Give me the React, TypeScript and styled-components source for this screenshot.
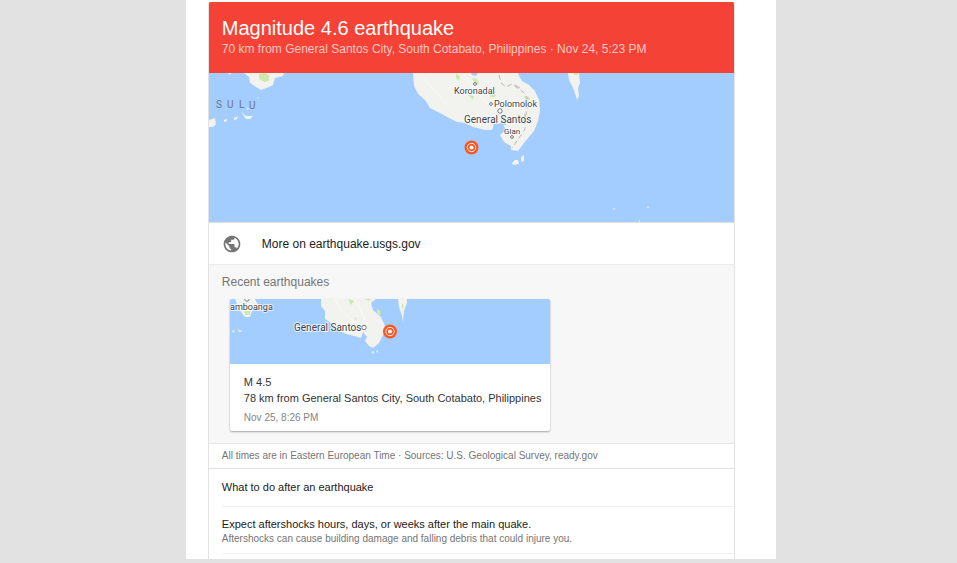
import React from "react";
import styled, { createGlobalStyle } from "styled-components";

const GlobalStyle = createGlobalStyle`
  * { box-sizing: border-box; }
  body {
    margin: 0;
    background: #e2e2e2;
    font-family: "Liberation Sans", Arial, sans-serif;
    color: #212121;
  }
  h1, h2, h3, p { margin: 0; font-weight: normal; }
`;

const Page = styled.main`
  min-height: 100vh;
  padding: 0 19% 4px;
  display: flex;
`;

const Sheet = styled.div`
  flex: 1;
  margin: 0 0 0 4px;
  padding: 2px 41px 0 22px;
  background: #fff;
`;

const Panel = styled.article`
  height: 100%;
  border: 1px solid #e2e2e2;
  border-width: 0 1px;
  border-radius: 2px 2px 0 0;
  overflow: hidden;
`;

const Header = styled.header`
  padding: 14px 13px;
  background: #f44336;
  color: #fff;
`;

const Title = styled.h1`
  font-size: 20px;
  line-height: 24px;
`;

const Subtitle = styled.p`
  font-size: 12px;
  line-height: 19px;
  color: #fcc7c3;
`;

const MapFrame = styled.div<{ $height: number }>`
  height: ${(p) => p.$height}px;
  overflow: hidden;
  background: #a3ccff;
  svg { display: block; }
`;

const MapLabel = styled.text<{ $size: number }>`
  font-family: Roboto, sans-serif;
  font-size: ${(p) => p.$size}px;
  fill: #444;
  stroke: #fff;
  stroke-width: 2px;
  stroke-opacity: 0.7;
  paint-order: stroke;
`;

const SeaLabel = styled(MapLabel)`
  fill: #6b7480;
  stroke: none;
`;

const SourceLink = styled.a`
  display: flex;
  align-items: center;
  gap: 20px;
  height: 43px;
  padding: 0 13px;
  border-top: 1px solid #e2e2e2;
  border-bottom: 1px solid #ebebeb;
  font-size: 12px;
  color: #212121;
  text-decoration: none;
`;

const Recent = styled.section`
  padding: 9px 13px 12px;
  background: #f7f7f7;
  border-bottom: 1px solid #e6e6e6;
`;

const RecentTitle = styled.h2`
  font-size: 12px;
  line-height: 16px;
  color: #757575;
`;

const QuakeCard = styled.a`
  display: block;
  width: 320px;
  max-width: 100%;
  margin: 9px 8px 0;
  overflow: hidden;
  border-radius: 2px;
  background: #fff;
  box-shadow: 0 1px 2px rgba(0, 0, 0, 0.35);
  color: #333;
  text-decoration: none;
`;

const CardBody = styled.div`
  padding: 10px 8px 6px 14px;
  font-size: 11px;
  line-height: 16px;
`;

const CardDate = styled.p`
  margin-top: 5px;
  font-size: 10px;
  line-height: 14px;
  color: #858585;
`;

const Sources = styled.p`
  padding: 0 13px;
  font-size: 10px;
  line-height: 24px;
  color: #757575;
  border-bottom: 1px solid #e2e2e2;
`;

const Tips = styled.section`
  padding-left: 13px;
`;

const TipsTitle = styled.h2`
  font-size: 11px;
  line-height: 37px;
  border-bottom: 1px solid #f0f0f0;
`;

const Tip = styled.div`
  padding: 10px 0 7px;
  border-bottom: 1px solid #f0f0f0;
`;

const TipTitle = styled.h3`
  font-size: 11px;
  line-height: 15px;
`;

const TipText = styled.p`
  font-size: 10px;
  line-height: 14px;
  color: #757575;
`;

const Epicenter = ({ x, y }: { x: number; y: number }) => (
  <g transform={`translate(${x} ${y})`}>
    <circle r="7" fill="#fa5523" />
    <circle r="4.2" fill="none" stroke="#fff" strokeWidth="0.9" />
    <circle r="2" fill="#fff" />
  </g>
);

const Town = ({ x, y, r = 1.4 }: { x: number; y: number; r?: number }) => (
  <circle cx={x} cy={y} r={r} fill="#fff" stroke="#777" strokeWidth="1" />
);

const RegionMap = () => (
  <svg width="525" height="149" viewBox="0 0 525 149" role="img" aria-label="Map of the earthquake epicenter">
    <g fill="#f2f2ee">
      <path d="M35 0L40 4L41 10L47 14L52 17L60 14L64 12L66 5L74 3L75 0Z" />
      <path d="M19 0H22L21 2ZM204 0L205 13L209 21L216 27L221 35L233 41L240 45L248 49L256 50L264 54L276 57L283 57L285 51L293 50L297 57L291 62L295 69L302 73L302 77L309 78L315 70L325 58L329 48L331 38L330 27L326 18L320 12L313 8L310 3L309 0Z" />
      <path d="M359 0L360 7L364 15L366 20L368 27L370 23L369 15L371 10L370 0Z" />
      <path d="M303 90L306 87H309L310 91L304 92ZM312 84L315 82V88L312 89Z" />
      <path d="M0 47L6 45L7 51L4 54L0 54ZM15 47L18 46L18 48L15 49ZM25 45L29 43L28 46L25 47ZM32 39L37 43L44 43L41 46L37 46ZM48 25L50 24L49 26ZM38 34L40 36L38 37Z" />
    </g>
    <g fill="#cde9ad">
      <path d="M50 1L55 0L60 2L60 8L55 9L50 6Z" />
      <path d="M247 1L251 3L250 8L247 5ZM263 5L268 6L270 11L266 12ZM259 22L265 23L264 27ZM282 20L287 21L286 24L281 24ZM315 23L320 24L321 27L316 27ZM365 0H369V2H365Z" />
    </g>
    <path d="M262 0L269 0L267 3L263 2ZM293 42L297 43L297 52L292 52Z" fill="#a3ccff" />
    <g fill="none" stroke="#b8b8b8" strokeWidth="1">
      <path d="M290 2L292 10L297 14L303 11L307 14L313 18L318 24L319 34L316 45L316 56L310 65L303 75" strokeDasharray="5 3" />
      <path d="M306 12L311 15M316 41L315 49" />
    </g>
    <g fill="none" stroke="#fff" strokeWidth="1" opacity="0.45">
      <path d="M255 0L262 12L278 30L291 42M213 3L225 17L240 34" />
    </g>
    <g fill="#e1e7f1">
      <circle cx="405" cy="136" r="1" /><circle cx="439" cy="134" r="1" /><path d="M429 149L431 146L431 149Z" />
    </g>
    <SeaLabel $size={10} x="7" y="35">S</SeaLabel>
    <SeaLabel $size={10} x="18" y="35">U</SeaLabel>
    <SeaLabel $size={10} x="30" y="35">L</SeaLabel>
    <SeaLabel $size={10} x="40" y="36">U</SeaLabel>
    <Town x={266} y={11} />
    <MapLabel $size={9} x="245" y="21">Koronadal</MapLabel>
    <Town x={282} y={31} />
    <MapLabel $size={9} x="285" y="34">Polomolok</MapLabel>
    <Town x={291} y={38} r={2.2} />
    <MapLabel $size={10} x="255" y="50">General Santos</MapLabel>
    <MapLabel $size={8} x="295" y="61">Glan</MapLabel>
    <Town x={303} y={64} />
    <Epicenter x={262.5} y={74.5} />
  </svg>
);

const CardMap = () => (
  <svg width="320" height="65" viewBox="0 0 320 65" role="img" aria-label="Map of the recent earthquake">
    <g fill="#f2f2ee">
      <path d="M91 0L91 7L95 12L95 20L101 24L108 31L116 35L124 37L131 39L133 33L137 38L135 42L139 47L143 49L149 44L154 34L155 27L151 18L143 11L141 4L146 0Z" />
      <path d="M8 8L11 13L15 18L20 18L22 12L29 8L25 0H5Z" />
      <path d="M168 0L169 8L172 17L173 23L174 12L177 4V0Z" />
      <path d="M141 53L144 52L144 55ZM146 52L148 51V54ZM2 31L5 32L3 34ZM7 28L9 31L13 32L9 33Z" />
    </g>
    <g fill="#cde9ad">
      <path d="M14 12L20 12L20 16L15 16ZM118 0L124 2L121 6ZM134 0L141 0L139 2ZM147 10L151 12L150 17L147 15ZM172 4L174 7L172 10ZM125 18L127 20L125 21Z" />
    </g>
    <g fill="none" stroke="#fff" strokeWidth="1" opacity="0.6">
      <path d="M104 0L113 13L123 22L134 30M125 0L132 14L137 25" />
    </g>
    <Town x={17} y={0} r={2.2} />
    <MapLabel $size={9} x="0" y="11">amboanga</MapLabel>
    <MapLabel $size={10} x="64" y="32">General Santos</MapLabel>
    <Town x={134} y={28.5} r={2.2} />
    <Epicenter x={160} y={32.5} />
  </svg>
);

const Globe = () => (
  <svg width="20" height="20" viewBox="0 0 24 24" fill="#757575" aria-hidden="true">
    <path d="M12 2C6.48 2 2 6.48 2 12s4.48 10 10 10 10-4.48 10-10S17.52 2 12 2zm-1 17.93c-3.95-.49-7-3.85-7-7.93 0-.62.08-1.21.21-1.79L9 15v1c0 1.1.9 2 2 2v1.93zm6.9-2.54c-.26-.81-1-1.39-1.9-1.39h-1v-3c0-.55-.45-1-1-1H8v-2h2c.55 0 1-.45 1-1V7h2c1.1 0 2-.9 2-2v-.41c2.93 1.19 5 4.06 5 7.41 0 2.08-.8 3.97-2.1 5.39z" />
  </svg>
);

export default function App() {
  return (
    <>
      <GlobalStyle />
      <Page>
        <Sheet>
          <Panel>
            <Header>
              <Title>Magnitude 4.6 earthquake</Title>
              <Subtitle>70 km from General Santos City, South Cotabato, Philippines · Nov 24, 5:23 PM</Subtitle>
            </Header>
            <MapFrame $height={149}><RegionMap /></MapFrame>
            <SourceLink href="#source"><Globe />More on earthquake.usgs.gov</SourceLink>
            <Recent>
              <RecentTitle>Recent earthquakes</RecentTitle>
              <QuakeCard href="#quake">
                <MapFrame $height={65}><CardMap /></MapFrame>
                <CardBody>
                  <p>M 4.5</p>
                  <p>78 km from General Santos City, South Cotabato, Philippines</p>
                  <CardDate>Nov 25, 8:26 PM</CardDate>
                </CardBody>
              </QuakeCard>
            </Recent>
            <Sources>All times are in Eastern European Time · Sources: U.S. Geological Survey, ready.gov</Sources>
            <Tips>
              <TipsTitle>What to do after an earthquake</TipsTitle>
              <Tip>
                <TipTitle>Expect aftershocks hours, days, or weeks after the main quake.</TipTitle>
                <TipText>Aftershocks can cause building damage and falling debris that could injure you.</TipText>
              </Tip>
            </Tips>
          </Panel>
        </Sheet>
      </Page>
    </>
  );
}
